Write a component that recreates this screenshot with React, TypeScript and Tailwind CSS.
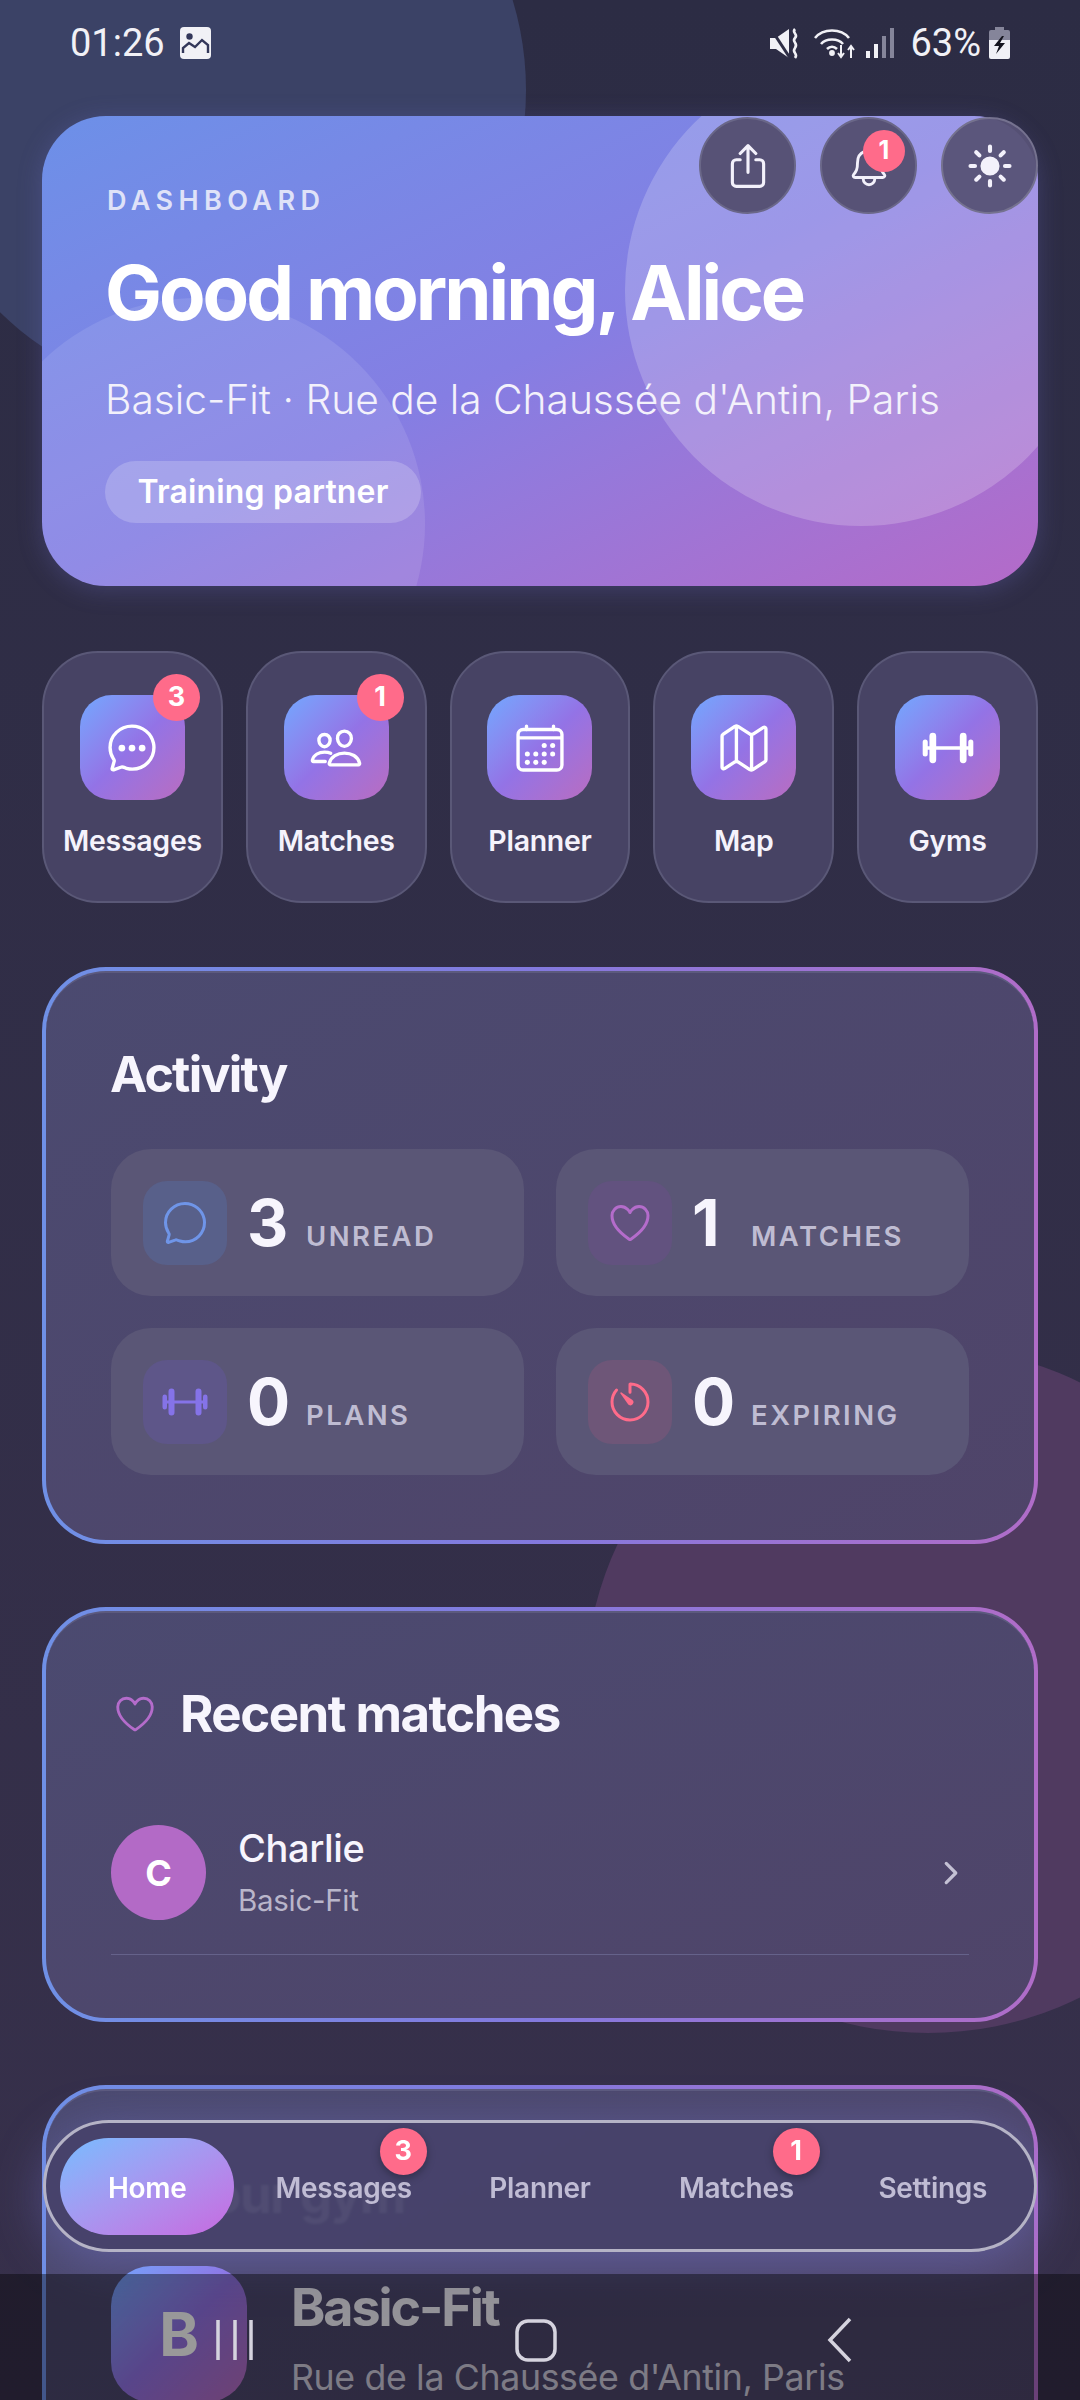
import React from 'react';
import {
  IoBarbellOutline,
  IoCalendarOutline,
  IoChatbubbleEllipsesOutline,
  IoChatbubbleOutline,
  IoChevronForward,
  IoHeartOutline,
  IoMapOutline,
  IoNotificationsOutline,
  IoPeopleOutline,
  IoShareOutline,
  IoSunny,
  IoTimerOutline,
} from 'react-icons/io5';

const Badge = ({ value, className }: { value: number; className: string }) => (
  <span className={`absolute flex h-[47px] w-[47px] items-center justify-center rounded-full bg-[#ff6b8a] text-[27px] font-bold text-white ${className}`}>
    {value}
  </span>
);

const tiles = [
  { label: 'Messages', icon: IoChatbubbleEllipsesOutline, badge: 3 },
  { label: 'Matches', icon: IoPeopleOutline, badge: 1 },
  { label: 'Planner', icon: IoCalendarOutline },
  { label: 'Map', icon: IoMapOutline },
  { label: 'Gyms', icon: IoBarbellOutline },
];

const stats = [
  { value: 3, label: 'UNREAD', icon: IoChatbubbleOutline, color: 'text-[#6f95e8]', box: 'bg-[#58608a]' },
  { value: 1, label: 'MATCHES', icon: IoHeartOutline, color: 'text-[#b46ccb]', box: 'bg-[#62527f]' },
  { value: 0, label: 'PLANS', icon: IoBarbellOutline, color: 'text-[#8573e8]', box: 'bg-[#5e5689]' },
  { value: 0, label: 'EXPIRING', icon: IoTimerOutline, color: 'text-[#ff6b8a]', box: 'bg-[#6e5678]' },
];

const navItems = [
  { label: 'Home' },
  { label: 'Messages', badge: 3 },
  { label: 'Planner' },
  { label: 'Matches', badge: 1 },
  { label: 'Settings' },
];

// card with the blue to purple gradient outline
const Card = ({ children, className = '' }: { children: React.ReactNode; className?: string }) => (
  <section className={`rounded-[64px] bg-gradient-to-r from-[#6f90e6] via-[#8379de] to-[#b06cc8] p-[4px] ${className}`}>
    <div className="h-full rounded-[60px] border-t-2 border-[#5c5a7e] bg-gradient-to-br from-[#4b4a70] to-[#4f4469] px-[65px] pt-[65px]">
      {children}
    </div>
  </section>
);

const StatusBar = () => (
  <div className="relative flex h-[116px] items-start justify-between pl-[70px] pr-[70px] pt-[24px] font-[family-name:Roboto] text-[38px] leading-[38px] text-[#f1f1f6]">
    <div className="flex items-center gap-[15px]">
      <span>01:26</span>
      <svg width="31" height="32" viewBox="0 0 31 32">
        <rect x="0" y="0" width="31" height="32" rx="4" fill="#f1f1f6" />
        <circle cx="9.5" cy="9.5" r="3.2" fill="#33375a" />
        <path d="M3 26v-5l6-5 6 4 7-7 6 5v8" fill="none" stroke="#33375a" strokeWidth="2.4" />
      </svg>
    </div>
    <div className="flex items-center">
      <svg width="30" height="31" viewBox="0 0 30 31" className="mr-[14px]" fill="#f1f1f6">
        <path d="M0 10h6l13-9v29L6 21H0z" />
        <path d="M1 1l19 29" stroke="#2d2d45" strokeWidth="3" />
        <path d="M25 1c-4 4 4 5 0 9s4 5 0 10 4 5 0 10" fill="none" stroke="#f1f1f6" strokeWidth="2.6" />
      </svg>
      <svg width="42" height="32" viewBox="0 0 42 32" className="mr-[10px]" fill="none" stroke="#f1f1f6" strokeWidth="2.6">
        <path d="M1 11C9 1 27 1 35 11" />
        <path d="M7 17c5-6 17-6 22 0" />
        <path d="M13 22c3-3 7-3 10 0" />
        <circle cx="18" cy="26" r="1.6" fill="#f1f1f6" />
        <path d="M27 18v12M24 26l3 4 3-4M37 31V19M34 23l3-4 3 4" strokeWidth="2" />
      </svg>
      <svg width="28" height="30" viewBox="0 0 28 30" className="mr-[16px]">
        <rect x="0" y="23" width="4" height="7" fill="#f1f1f6" />
        <rect x="8" y="16" width="4" height="14" fill="#f1f1f6" />
        <rect x="16" y="8" width="4" height="22" fill="#85859a" />
        <rect x="24" y="0" width="4" height="30" fill="#85859a" />
      </svg>
      <span className="mr-[8px]">63%</span>
      <svg width="21" height="32" viewBox="0 0 21 32">
        <path d="M6 0h9v3h4a2 2 0 0 1 2 2v8H0V5a2 2 0 0 1 2-2h4z" fill="#85859a" />
        <path d="M0 13h21v17a2 2 0 0 1-2 2H2a2 2 0 0 1-2-2z" fill="#f1f1f6" />
        <path d="M13 9l-8 10h5l-3 8 9-11h-5l4-7z" fill="#15151f" />
      </svg>
    </div>
  </div>
);

const Hero = () => (
  <section className="relative h-[470px]">
    <div className="absolute inset-0 overflow-hidden rounded-[64px] bg-gradient-to-br from-[#6c90e8] via-[#857ee3] to-[#b46ac8] shadow-[0_4px_24px_rgba(120,120,220,0.25)]">
      <div className="absolute left-[583px] top-[-62px] h-[472px] w-[472px] rounded-full bg-white/20" />
      <div className="absolute left-[-69px] top-[182px] h-[452px] w-[452px] rounded-full bg-white/[0.1]" />
    </div>
    <div className="relative pl-[63px] pt-[70px]">
      <p className="ml-[2px] text-[27px] font-semibold leading-[30px] tracking-[0.2em] text-[#dfe2f8]">DASHBOARD</p>
      <h1 className="mt-[31px] text-[76px] font-bold leading-[90px] tracking-[-0.04em] text-white">Good morning, Alice</h1>
      <p className="mt-[40px] whitespace-nowrap text-[40.7px] font-light leading-[46px] text-[#f3f1fb]">Basic-Fit · Rue de la Chaussée d'Antin, Paris</p>
      <span className="mt-[38px] flex h-[62px] w-[316px] items-center justify-center rounded-full bg-white/20 text-[32px] font-semibold tracking-[0.005em] text-white">
        Training partner
      </span>
    </div>
    <div className="absolute right-0 top-[1px] flex gap-[24px]">
      <button className="flex h-[97px] w-[97px] items-center justify-center rounded-full border-2 border-[#6a6788] bg-[#575276] text-[#f3f1fb]">
        <IoShareOutline size={50} />
      </button>
      <button className="relative flex h-[97px] w-[97px] items-center justify-center rounded-full border-2 border-[#6a6788] bg-[#575276] text-[#f3f1fb]">
        <IoNotificationsOutline size={46} />
        <span className="absolute right-[10px] top-[11px] flex h-[42px] w-[42px] items-center justify-center rounded-full bg-[#ff6b8a] text-[25px] font-bold text-white">1</span>
      </button>
      <button className="flex h-[97px] w-[97px] items-center justify-center rounded-full border-2 border-[#75728f] bg-[#575276]/95 text-[#f3f1fb]">
        <IoSunny size={48} />
      </button>
    </div>
  </section>
);

const QuickTiles = () => (
  <div className="mt-[65px] grid grid-cols-5 gap-[23px]">
    {tiles.map((tile) => {
      const Icon = tile.icon;
      return (
        <div key={tile.label} className="flex h-[252px] flex-col items-center rounded-[56px] border-2 border-[#5a5877] bg-[#474364] pt-[42px]">
          <div className="relative flex h-[105px] w-[105px] items-center justify-center rounded-[32px] bg-gradient-to-br from-[#6fa8ff] via-[#9373e6] to-[#b96cc0] text-white">
            <Icon size={54} />
            {tile.badge && <Badge value={tile.badge} className="right-[-15px] top-[-21px]" />}
          </div>
          <span className="mt-[23px] whitespace-nowrap text-[28.5px] font-semibold leading-[36px] tracking-[-0.01em] text-[#f5f3fc]">{tile.label}</span>
        </div>
      );
    })}
  </div>
);

const Activity = () => (
  <Card className="mt-[64px] h-[577px]">
    <h2 className="ml-[-1px] text-[50px] font-bold leading-[72px] tracking-[-0.035em] text-[#f7f5fd]">Activity</h2>
    <div className="mt-[39px] grid grid-cols-2 gap-[32px]">
      {stats.map((stat) => {
        const Icon = stat.icon;
        return (
          <div key={stat.label} className="flex h-[147px] items-center rounded-[40px] bg-[#5a5676] pl-[32px]">
            <div className={`flex h-[84px] w-[84px] items-center justify-center rounded-[24px] ${stat.box} ${stat.color}`}>
              <Icon size={48} />
            </div>
            <div className="ml-[20px] flex items-baseline">
              <span className="w-[59px] text-[64px] font-bold leading-[72px] tracking-[-0.03em] text-[#f7f5fd]">{stat.value}</span>
              <span className="text-[27.5px] font-semibold tracking-[0.09em] text-[#bfbcd2]">{stat.label}</span>
            </div>
          </div>
        );
      })}
    </div>
  </Card>
);

const RecentMatches = () => (
  <Card className="mt-[63px] h-[415px]">
    <div className="flex items-center">
      <IoHeartOutline size={46} className="ml-[1px] text-[#b46ccb]" />
      <h2 className="ml-[22px] text-[51px] font-bold leading-[72px] tracking-[-0.03em] text-[#f7f5fd]">Recent matches</h2>
    </div>
    <div className="mt-[75px] flex items-center border-b border-[#65628a] pb-[34px]">
      <div className="flex h-[95px] w-[95px] items-center justify-center rounded-full bg-[#b36ac6] text-[36px] font-bold text-white">C</div>
      <div className="ml-[32px] flex-1">
        <p className="text-[38px] font-medium leading-[46px] tracking-[-0.01em] text-[#f7f5fd]">Charlie</p>
        <p className="mt-[9px] text-[29.5px] leading-[40px] tracking-[-0.01em] text-[#b9b6ca]">Basic-Fit</p>
      </div>
      <IoChevronForward size={34} className="mr-[1px] text-[#c4c1d4]" />
    </div>
  </Card>
);

const YourGym = () => (
  <Card className="mt-[63px] h-[500px]">
    <div className="mt-[3px] flex items-center">
      <IoBarbellOutline size={46} className="ml-[1px] text-[#8573e8]" />
      <h2 className="ml-[22px] text-[51px] font-bold leading-[72px] tracking-[-0.03em] text-[#f7f5fd]">Your gym</h2>
    </div>
    <div className="mt-[35px] flex">
      <div className="flex h-[136px] w-[136px] shrink-0 items-center justify-center rounded-[40px] bg-gradient-to-br from-[#6fa8ff] via-[#9373e6] to-[#b96cc0] text-[60px] font-bold text-white">B</div>
      <div className="ml-[44px]">
        <p className="mt-[12px] text-[52px] font-bold leading-[60px] tracking-[-0.04em] text-[#f7f5fd]">Basic-Fit</p>
        <p className="mt-[16px] whitespace-nowrap text-[35.7px] leading-[46px] tracking-[-0.01em] text-[#d0cdde]">Rue de la Chaussée d'Antin, Paris</p>
      </div>
    </div>
  </Card>
);

const BottomNav = () => (
  <nav className="absolute left-[43px] top-[2120px] grid h-[132px] w-[994px] grid-cols-5 items-center rounded-full border-[3px] border-[#b5b3c6] bg-[#47426a]/95 px-[3px] shadow-[0_10px_50px_rgba(125,125,225,0.4)] backdrop-blur-[1px]">
    {navItems.map((item, i) => (
      <div key={item.label} className="relative flex h-[97px] items-center justify-center">
        <div className={`flex h-[97px] items-center justify-center ${i === 0 ? 'w-[174px] rounded-full bg-gradient-to-br from-[#73bcff] to-[#c668e0] text-white' : 'text-[#c0bcd4]'}`}>
          <span className="pt-[3px] text-[28px] font-semibold tracking-[-0.01em]">{item.label}</span>
        </div>
        {item.badge && <Badge value={item.badge} className="right-[15px] top-[-10px] shadow-[0_3px_8px_rgba(0,0,0,0.3)]" />}
      </div>
    ))}
  </nav>
);

const AndroidBar = () => (
  <div className="absolute bottom-0 left-0 h-[126px] w-full bg-black/40">
    <svg width="1080" height="126" viewBox="0 0 1080 126" fill="none" stroke="#d5d3de" strokeWidth="3.5">
      <path d="M218 46v40M235 46v40M251 46v40" />
      <rect x="517" y="47" width="38" height="39" rx="11" />
      <path d="M850 45 830 66l20 21" />
    </svg>
  </div>
);

export default function App() {
  return (
    <div className="relative h-[2400px] w-[1080px] overflow-hidden bg-gradient-to-b from-[#2c2c44] to-[#37304b] font-[family-name:Inter] text-white">
      <div className="absolute left-[-94px] top-[-220px] h-[620px] w-[620px] rounded-full bg-[#3b4266]" />
      <div className="absolute left-[585px] top-[1347px] h-[686px] w-[686px] rounded-full bg-[#503a60]" />
      <div className="relative">
        <StatusBar />
        <main className="px-[42px]">
          <Hero />
          <QuickTiles />
          <Activity />
          <RecentMatches />
          <YourGym />
        </main>
      </div>
      <BottomNav />
      <AndroidBar />
    </div>
  );
}
